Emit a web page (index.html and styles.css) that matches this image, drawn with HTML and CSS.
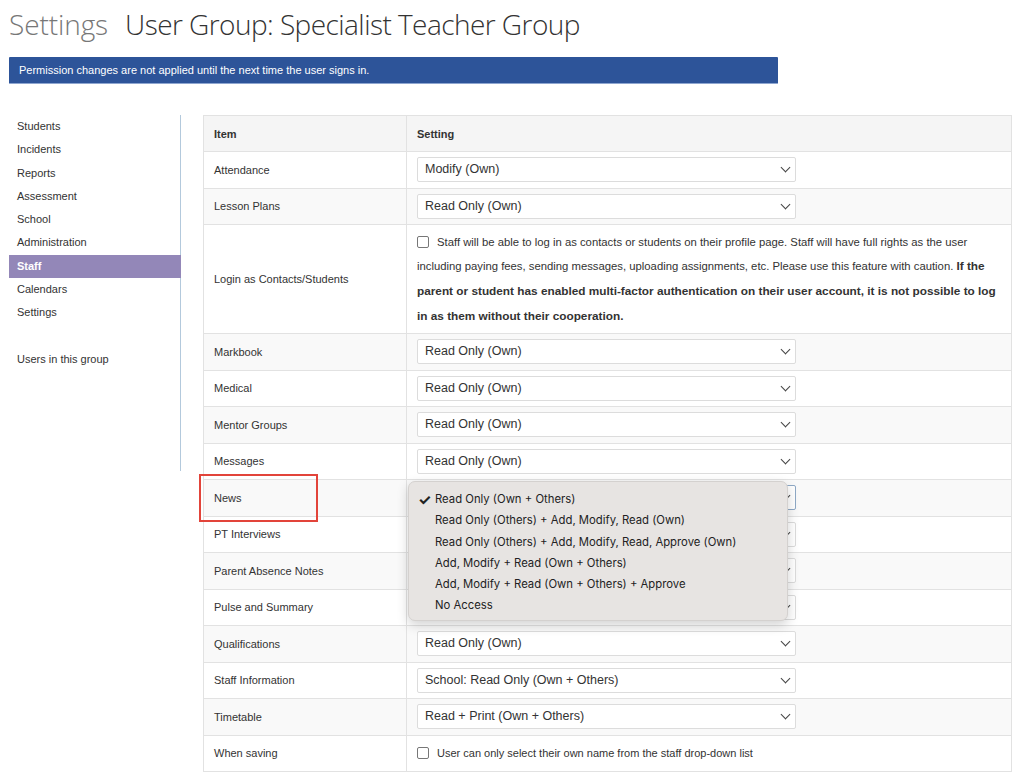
FILE: index.html
```html
<!DOCTYPE html>
<html>
<head>
<meta charset="utf-8">
<link rel="stylesheet" href="styles.css">
</head>
<body>
<div class="page">
  <h1 class="title"><span class="crumb">Settings</span><span class="name">User Group: Specialist Teacher Group</span></h1>
  <div class="banner">Permission changes are not applied until the next time the user signs in.</div>
  <div class="layout">
    <nav class="sidebar">
      <a class="nav-item">Students</a>
      <a class="nav-item">Incidents</a>
      <a class="nav-item">Reports</a>
      <a class="nav-item">Assessment</a>
      <a class="nav-item">School</a>
      <a class="nav-item">Administration</a>
      <a class="nav-item active">Staff</a>
      <a class="nav-item">Calendars</a>
      <a class="nav-item">Settings</a>
      <span class="nav-gap"></span>
      <a class="nav-item">Users in this group</a>
    </nav>
    <table class="perm">
      <thead>
        <tr><th class="col-item">Item</th><th>Setting</th></tr>
      </thead>
      <tbody>
        <tr><td>Attendance</td><td><div class="sel">Modify (Own)<span class="chev"></span></div></td></tr>
        <tr><td>Lesson Plans</td><td><div class="sel">Read Only (Own)<span class="chev"></span></div></td></tr>
        <tr class="tall"><td>Login as Contacts/Students</td><td class="para"><span class="cb"></span>Staff will be able to log in as contacts or students on their profile page. Staff will have full rights as the user including paying fees, sending messages, uploading assignments, etc. Please use this feature with caution. <b>If the parent or student has enabled multi-factor authentication on their user account, it is not possible to log in as them without their cooperation.</b></td></tr>
        <tr><td>Markbook</td><td><div class="sel">Read Only (Own)<span class="chev"></span></div></td></tr>
        <tr><td>Medical</td><td><div class="sel">Read Only (Own)<span class="chev"></span></div></td></tr>
        <tr><td>Mentor Groups</td><td><div class="sel">Read Only (Own)<span class="chev"></span></div></td></tr>
        <tr><td>Messages</td><td><div class="sel">Read Only (Own)<span class="chev"></span></div></td></tr>
        <tr><td class="rel">News<span class="highlight"></span></td><td class="rel"><div class="sel focus">Read Only (Own + Others)<span class="chev"></span></div>
          <ul class="menu">
            <li class="checked"><span class="tick">✓</span>Read Only (Own + Others)</li>
            <li>Read Only (Others) + Add, Modify, Read (Own)</li>
            <li>Read Only (Others) + Add, Modify, Read, Approve (Own)</li>
            <li>Add, Modify + Read (Own + Others)</li>
            <li>Add, Modify + Read (Own + Others) + Approve</li>
            <li>No Access</li>
          </ul>
        </td></tr>
        <tr><td>PT Interviews</td><td><div class="sel">Read Only (Own)<span class="chev"></span></div></td></tr>
        <tr><td>Parent Absence Notes</td><td><div class="sel">Read Only (Own)<span class="chev"></span></div></td></tr>
        <tr><td>Pulse and Summary</td><td><div class="sel">Read Only (Own)<span class="chev"></span></div></td></tr>
        <tr><td>Qualifications</td><td><div class="sel">Read Only (Own)<span class="chev"></span></div></td></tr>
        <tr><td>Staff Information</td><td><div class="sel">School: Read Only (Own + Others)<span class="chev"></span></div></td></tr>
        <tr><td>Timetable</td><td><div class="sel">Read + Print (Own + Others)<span class="chev"></span></div></td></tr>
        <tr><td>When saving</td><td class="check-row"><span class="cb"></span>User can only select their own name from the staff drop-down list</td></tr>
      </tbody>
    </table>
  </div>
</div>
</body>
</html>
```
FILE: styles.css
```css
* { box-sizing: border-box; }
html, body { margin: 0; padding: 0; background: #fff; }
body {
  font-family: "Liberation Sans", Arial, sans-serif;
  font-size: 11px;
  color: #333;
}
.page { padding: 0 0 0 9px; width: 1024px; }
.title {
  margin: 0;
  height: 57px;
  padding-top: 5px;
  font-family: "Open Sans", sans-serif;
  font-weight: 300;
  font-size: 28px;
  line-height: 38px;
}
.crumb { color: #777; margin-right: 17px; letter-spacing: -0.1px; }
.name { color: #333; letter-spacing: -0.55px; }
.banner {
  width: 769px;
  height: 27px;
  background: #2d5499;
  border-bottom: 1px solid #8ea6d0;
  color: #fff;
  padding: 0 10px;
  line-height: 26px;
  font-size: 11px;
  border-radius: 1px;
}
.layout {
  display: flex;
  align-items: flex-start;
  margin-top: 31px;
  gap: 22px;
}
.sidebar {
  width: 172px;
  height: 356px;
  border-right: 1px solid #b3c9dc;
  display: flex;
  flex-direction: column;
  flex: none;
}
.nav-item {
  display: block;
  height: 23.3px;
  line-height: 23.3px;
  padding-left: 8px;
  font-size: 11px;
  color: #333;
}
.nav-item.active {
  background: #9387b8;
  color: #fff;
  font-weight: bold;
  margin-right: -1px;
}
.nav-gap { display: block; height: 23.3px; }
.perm {
  width: 809px;
  border-collapse: collapse;
  border: 1px solid #e2e2e2;
  flex: none;
}
.perm th, .perm td {
  border: 1px solid #e2e2e2;
  text-align: left;
  vertical-align: middle;
  padding: 0 10px;
  height: 36.5px;
}
.perm th {
  background: #f5f5f5;
  font-weight: bold;
  height: 36px;
}
.col-item { width: 203px; }
.perm tbody tr:nth-child(even) { background: #f9f9f9; }
.perm tr.tall td { height: 109px; }
.para {
  line-height: 24.7px;
  font-size: 11.3px;
  padding: 4px 10px 3px 10px;
}
.para b { font-size: 11.8px; }
.cb {
  display: inline-block;
  width: 12px;
  height: 12px;
  border: 1px solid #777;
  border-radius: 2px;
  background: #fff;
  vertical-align: -2px;
  margin-right: 8px;
}
.sel {
  position: relative;
  width: 379px;
  height: 25px;
  border: 1px solid #dcdcdc;
  border-radius: 2px;
  background: #fff;
  padding-left: 7px;
  line-height: 23px;
  font-size: 12.5px;
  color: #333;
}
.sel.focus { border-color: #8fa9c6; }
.chev {
  position: absolute;
  right: 6px;
  top: 6px;
  width: 7px;
  height: 7px;
  border-right: 1.2px solid #444;
  border-bottom: 1.2px solid #444;
  transform: rotate(45deg);
}
.rel { position: relative; }
.highlight {
  position: absolute;
  left: -5px;
  top: -6px;
  width: 119px;
  height: 48px;
  border: 2px solid #e2443a;
}
.menu {
  position: absolute;
  left: 1px;
  top: 1px;
  width: 380px;
  margin: 0;
  padding: 7px 0 0 0;
  height: 140px;
  list-style: none;
  background: #e7e4e2;
  border: 1px solid #d4d1cf;
  border-radius: 7px;
  box-shadow: 0 4px 12px rgba(0,0,0,0.18);
  font-family: "Inter", "Noto Sans", sans-serif;
  font-size: 11.3px;
  color: #222;
  z-index: 5;
}
.menu li {
  height: 21.3px;
  line-height: 21.3px;
  padding-left: 26px;
  position: relative;
}
.tick {
  position: absolute;
  left: 9px;
  font-size: 15px;
  font-weight: bold;
}
.check-row { }
```
